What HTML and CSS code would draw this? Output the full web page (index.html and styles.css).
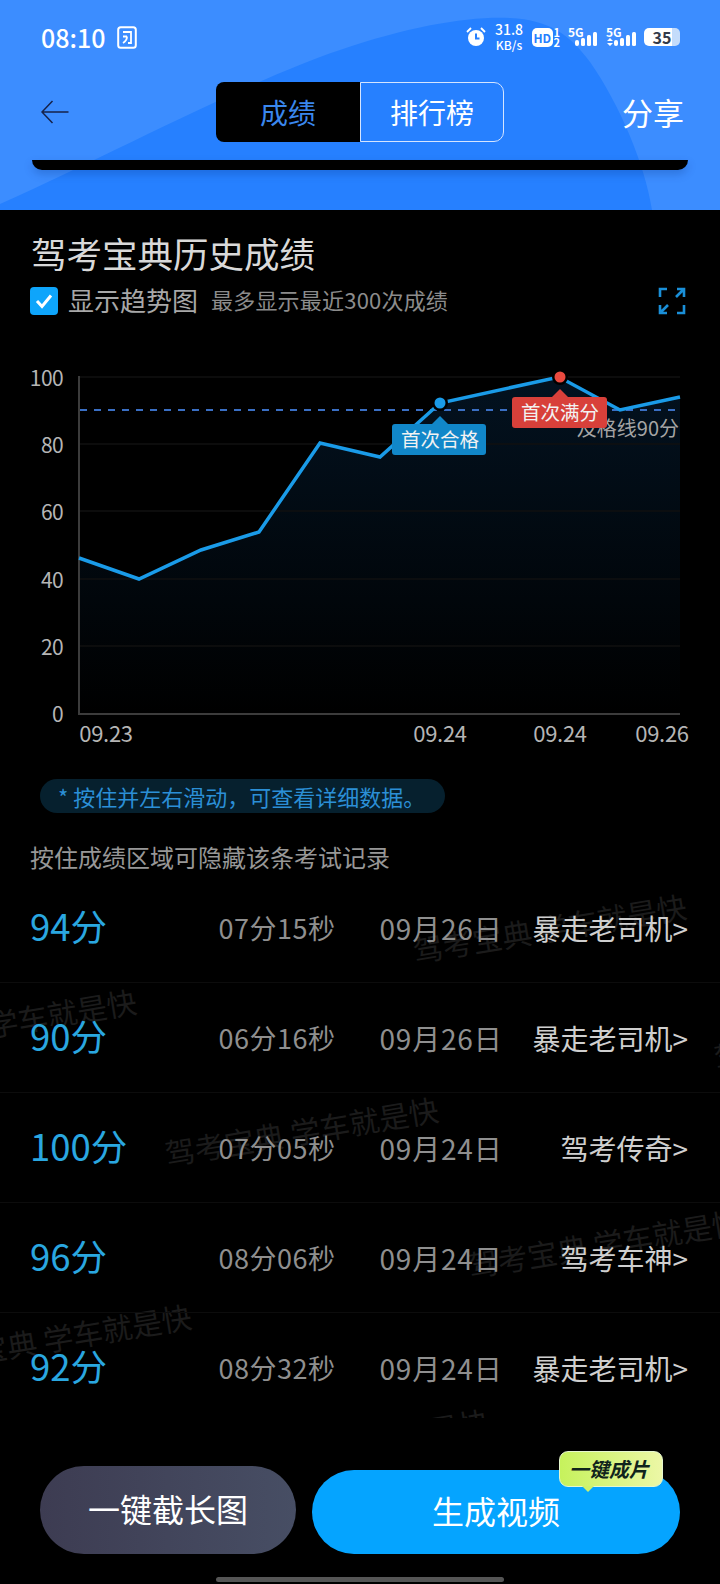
FILE: index.html
```html
<!DOCTYPE html>
<html lang="zh-CN">
<head>
    <meta charset="UTF-8">
    <meta name="viewport" content="width=device-width, initial-scale=1.0">
    <title>驾考宝典历史成绩</title>
    <link rel="stylesheet" href="styles.css">
</head>
<body>
    <header class="top">
        <svg class="top-blob" width="720" height="210" viewBox="0 0 720 210">
            <path d="M0 210 L0 204 C120 150 250 80 340 50 C410 26 470 16 510 18 C550 20 570 35 590 62 C620 105 645 165 652 210 Z" fill="#2680ff"/>
        </svg>
        <div class="status">
            <div class="status-left">
                <span class="clock">08:10</span>
                <svg width="20" height="23" viewBox="0 0 20 23">
                    <rect x="1.2" y="1.2" width="17.6" height="20.6" rx="2.5" fill="none" stroke="#fff" stroke-width="2"/>
                    <path d="M6 6h8v11h-3M6 10.5h4M10 10.5c0 3-1.500 5-4 6.500" fill="none" stroke="#fff" stroke-width="1.800"/>
                </svg>
            </div>
            <div class="status-right">
                <svg width="20" height="20" viewBox="0 0 20 20">
                    <circle cx="10" cy="11" r="8" fill="#fff"/>
                    <path d="M1 5l4-4M19 5l-4-4" stroke="#fff" stroke-width="1.800"/>
                    <path d="M10 6.500v5h3.500" fill="none" stroke="#2680ff" stroke-width="2"/>
                </svg>
                <div class="net"><span>31.8</span><span>KB/s</span></div>
                <div class="hd">
                    <span class="hd-box">HD</span>
                    <span class="sim"><span>1</span><span>2</span></span>
                </div>
                <div class="sig">
                    <span class="sig-text">5G</span>
                    <svg width="30" height="20" viewBox="0 0 30 20">
                        <rect x="7" y="13" width="4" height="6" rx="2" fill="#fff"/>
                        <rect x="13" y="11" width="4" height="8" rx="1.500" fill="#fff"/>
                        <rect x="19" y="8" width="4" height="11" rx="1.500" fill="#fff"/>
                        <rect x="25" y="5" width="4" height="14" rx="1.500" fill="#fff"/>
                    </svg>
                </div>
                <div class="sig">
                    <span class="sig-text">5G</span>
                    <svg width="30" height="20" viewBox="0 0 30 20">
                        <path d="M1 14l3-3 3 3zM1 16h6l-3 3z" fill="#fff"/>
                        <rect x="8" y="13" width="4" height="6" rx="2" fill="#fff"/>
                        <rect x="14" y="11" width="4" height="8" rx="1.500" fill="#fff"/>
                        <rect x="20" y="8" width="4" height="11" rx="1.500" fill="#fff"/>
                        <rect x="26" y="5" width="4" height="14" rx="1.500" fill="#fff"/>
                    </svg>
                </div>
                <div class="battery"><span>35</span></div>
            </div>
        </div>
        <nav class="nav">
            <svg class="back" width="28" height="24" viewBox="0 0 28 24">
                <path d="M27.500 12H1.500M11.500 1L1 12l10.500 11" fill="none" stroke="#16224a" stroke-width="1.500"/>
            </svg>
            <div class="tabs">
                <div class="tab tab-on">成绩</div>
                <div class="tab tab-off">排行榜</div>
            </div>
            <div class="share">分享</div>
        </nav>
        <div class="peek-bar"></div>
    </header>

    <main class="content">
        <div class="wm wm-1">驾考宝典 学车就是快</div>
        <div class="wm wm-2">驾考宝典 学车就是快</div>
        <div class="wm wm-3">驾考宝典 学车就是快</div>
        <div class="wm wm-4">驾考宝典 学车就是快</div>
        <div class="wm wm-5">驾考宝典 学车就是快</div>
        <div class="wm wm-6">驾考宝典 学车就是快</div>
        <div class="wm wm-7">驾考宝典 学车就是快</div>

        <h1 class="title">驾考宝典历史成绩</h1>
        <div class="trend-row">
            <span class="check">
                <svg width="18" height="16" viewBox="0 0 18 16">
                    <path d="M2 8l5 5.500L16 2.500" fill="none" stroke="#fff" stroke-width="3"/>
                </svg>
            </span>
            <span class="trend-label">显示趋势图</span>
            <span class="trend-sub">最多显示最近300次成绩</span>
            <svg class="expand" width="28" height="28" viewBox="0 0 28 28">
                <path d="M9 2H2v8M19 2h7v8M26 2l-8 8M2 18v8h7M2 26l8-8M26 18v8h-7" fill="none" stroke="#1a8fd8" stroke-width="2.600"/>
            </svg>
        </div>

        <svg class="chart" width="720" height="420" viewBox="0 340 720 420">
            <defs>
                <linearGradient id="area" x1="0" y1="0" x2="0" y2="1">
                    <stop offset="0" stop-color="#031220"/>
                    <stop offset="1" stop-color="#000"/>
                </linearGradient>
            </defs>
            <path d="M79 558L139 579L201 550L259 532L320 443L380 457L440 403L559 376L620 410L680 397V713H79Z" fill="url(#area)"/>
            <g stroke="#101010" stroke-width="1.500">
                <path d="M79 377H680M79 444H680M79 511H680M79 579H680M79 646H680"/>
            </g>
            <path d="M79 376V714H680" fill="none" stroke="#3c3c3c" stroke-width="2"/>
            <path d="M80 410H680" stroke="#3a6fc4" stroke-width="2" stroke-dasharray="7 7"/>
            <path d="M79 558L139 579L201 550L259 532L320 443L380 457L440 403L559 377L620 410L680 397" fill="none" stroke="#1a9be8" stroke-width="3.500" stroke-linejoin="miter"/>

            <g class="axis-y" text-anchor="end">
                <text x="63" y="386">100</text>
                <text x="63" y="453">80</text>
                <text x="63" y="520">60</text>
                <text x="63" y="588">40</text>
                <text x="63" y="655">20</text>
                <text x="63" y="722">0</text>
            </g>
            <g class="axis-x" text-anchor="middle">
                <text x="106" y="742">09.23</text>
                <text x="440" y="742">09.24</text>
                <text x="560" y="742">09.24</text>
                <text x="662" y="742">09.26</text>
            </g>

            <text class="pass-text" x="679" y="436" text-anchor="end">及格线90分</text>

            <circle cx="440" cy="403" r="8" fill="#000"/>
            <circle cx="440" cy="403" r="5.500" fill="#1a9be8"/>
            <path d="M432 424L440 416L448 424Z" fill="#1187c9"/>
            <rect x="392" y="424" width="94" height="31" rx="3" fill="#1187c9"/>
            <text class="tag-text" x="440" y="447" text-anchor="middle">首次合格</text>

            <circle cx="560" cy="377" r="8" fill="#000"/>
            <circle cx="560" cy="377" r="5.500" fill="#ea4a3f"/>
            <path d="M552 397L560 389L568 397Z" fill="#d8403a"/>
            <rect x="512" y="397" width="95" height="31" rx="3" fill="#d8403a"/>
            <text class="tag-text" x="560" y="420" text-anchor="middle">首次满分</text>
        </svg>

        <div class="hint">* 按住并左右滑动，可查看详细数据。</div>
        <div class="hide-tip">按住成绩区域可隐藏该条考试记录</div>

        <div class="rows">
            <div class="row">
                <span class="score">94分</span><span class="time">07分15秒</span><span class="date">09月26日</span><span class="level">暴走老司机&gt;</span>
            </div>
            <div class="row">
                <span class="score">90分</span><span class="time">06分16秒</span><span class="date">09月26日</span><span class="level">暴走老司机&gt;</span>
            </div>
            <div class="row">
                <span class="score">100分</span><span class="time">07分05秒</span><span class="date">09月24日</span><span class="level">驾考传奇&gt;</span>
            </div>
            <div class="row">
                <span class="score">96分</span><span class="time">08分06秒</span><span class="date">09月24日</span><span class="level">驾考车神&gt;</span>
            </div>
            <div class="row">
                <span class="score">92分</span><span class="time">08分32秒</span><span class="date">09月24日</span><span class="level">暴走老司机&gt;</span>
            </div>
        </div>
    </main>

    <footer class="bottom">
        <div class="actions">
            <button class="btn btn-shot">一键截长图</button>
            <button class="btn btn-video">生成视频
                <span class="badge">一键成片</span>
            </button>
        </div>
        <div class="home-bar"></div>
    </footer>
</body>
</html>
```
FILE: styles.css
```css
* {
    box-sizing: border-box;
}
body {
    width: 720px;
    height: 1584px;
    margin: 0;
    overflow: hidden;
    background: #000;
    color: #fff;
    font-family: "Noto Sans CJK SC", "Noto Sans", sans-serif;
}
.top {
    position: relative;
    height: 210px;
    background: #3c8dff;
    overflow: hidden;
}
.top-blob {
    position: absolute;
    left: 0;
    top: 0;
}
.status,
.nav,
.peek-bar {
    position: relative;
}
.status {
    display: flex;
    justify-content: space-between;
    align-items: center;
    height: 74px;
    padding: 0 40px 0 41px;
}
.status-left {
    display: flex;
    align-items: center;
    gap: 12px;
}
.clock {
    font-size: 25px;
    font-weight: 500;
    line-height: 30px;
}
.status-right {
    display: flex;
    align-items: center;
    gap: 8px;
}
.net {
    display: flex;
    flex-direction: column;
    align-items: center;
    width: 30px;
    font-size: 14px;
    font-weight: 500;
    line-height: 15px;
}
.net span + span {
    font-size: 12px;
}
.hd {
    display: flex;
    align-items: center;
    gap: 1px;
    width: 28px;
    height: 20px;
}
.hd-box {
    width: 21px;
    height: 19px;
    border-radius: 5px;
    background: #fff;
    color: #2680ff;
    font-size: 12px;
    font-weight: 700;
    line-height: 19px;
    text-align: center;
}
.sim {
    display: flex;
    flex-direction: column;
    font-size: 11px;
    font-weight: 700;
    line-height: 10px;
}
.sig {
    position: relative;
    display: flex;
    width: 30px;
    height: 20px;
}
.sig-text {
    position: absolute;
    left: 0;
    top: -1px;
    font-size: 12px;
    font-weight: 700;
    line-height: 12px;
}
.battery {
    display: flex;
    justify-content: center;
    align-items: center;
    width: 36px;
    height: 18px;
    border-radius: 5px;
    background: linear-gradient(90deg, #fff 78%, #c4dcfb 78%);
    color: #333b4a;
    font-size: 16px;
    font-weight: 700;
    line-height: 18px;
}
.nav {
    display: grid;
    grid-template-columns: 1fr 288px 1fr;
    align-items: center;
    height: 76px;
    padding: 0 36px;
}
.back {
    display: block;
    margin-left: 5px;
}
.tabs {
    display: flex;
    height: 60px;
}
.tab {
    display: flex;
    justify-content: center;
    align-items: center;
    width: 144px;
    font-size: 28px;
}
.tab-on {
    background: #000;
    border-radius: 8px 0 0 8px;
    color: #3a87ee;
}
.tab-off {
    border: 1px solid #d5e5ff;
    border-radius: 0 10px 10px 0;
}
.share {
    justify-self: end;
    font-size: 31px;
    line-height: 40px;
}
.peek-bar {
    height: 10px;
    margin: 10px 32px 0;
    background: #000;
    border-radius: 0 0 12px 12px;
    box-shadow: 0 4px 8px rgba(0, 40, 110, 0.25);
}
.content {
    position: relative;
    height: 1208px;
    padding-top: 23px;
    overflow: hidden;
}
.wm {
    position: absolute;
    color: #1b1b1b;
    font-size: 30px;
    line-height: 40px;
    white-space: nowrap;
    transform: rotate(-9.400deg);
    transform-origin: left center;
}
.wm-1 { left: 413px; top: 720px; }
.wm-2 { left: -137px; top: 815px; }
.wm-3 { left: 165px; top: 923px; }
.wm-4 { left: 468px; top: 1035px; }
.wm-5 { left: -82px; top: 1130px; }
.wm-6 { left: 215px; top: 1235px; }
.wm-7 { left: 714px; top: 827px; }
.title {
    position: relative;
    margin: 0;
    padding-left: 31px;
    color: #d9d9d9;
    font-size: 35.500px;
    font-weight: 400;
    line-height: 40px;
}
.trend-row {
    display: flex;
    align-items: center;
    height: 28px;
    margin-top: 14px;
    padding: 0 34px 0 30px;
}
.check {
    display: flex;
    justify-content: center;
    align-items: center;
    width: 28px;
    height: 28px;
    margin-right: 10px;
    border-radius: 4px;
    background: #0ea5fb;
}
.trend-label {
    margin-right: 13px;
    padding-bottom: 4px;
    color: #a8a8a8;
    font-size: 26px;
}
.trend-sub {
    padding-bottom: 4px;
    color: #8c8c8c;
    font-size: 22px;
    letter-spacing: 0.2px;
}
.expand {
    margin-left: auto;
}
.chart {
    display: block;
    margin-top: 25px;
}
.axis-y text,
.axis-x text {
    fill: #b5b5b5;
    font-size: 21px;
    letter-spacing: -0.6px;
}
.axis-x text {
    font-size: 22px;
    letter-spacing: -0.3px;
}
.pass-text {
    fill: #a5a5a5;
    font-size: 20px;
}
.tag-text {
    fill: #f2f2f2;
    font-size: 19.500px;
}
.hint {
    width: 405px;
    height: 34px;
    margin: 19px 0 0 40px;
    padding-left: 18px;
    border-radius: 17px;
    background: #06202e;
    color: #2b8fd6;
    font-size: 22px;
    line-height: 34px;
    white-space: nowrap;
}
.hide-tip {
    margin-top: 28px;
    padding-left: 30px;
    color: #979797;
    font-size: 24px;
    line-height: 32px;
}
.rows {
    position: relative;
}
.row {
    display: grid;
    grid-template-columns: 150px 194px 134px 1fr;
    align-items: center;
    height: 110px;
    padding: 0 32px 0 30px;
    border-bottom: 1px solid #0c0c0c;
}
.score {
    padding-bottom: 3px;
    color: #2aa7e0;
    font-size: 36.500px;
    line-height: 44px;
}
.time,
.date {
    color: #8f8f8f;
    font-size: 27px;
    letter-spacing: 0.5px;
    line-height: 36px;
    text-align: center;
    white-space: nowrap;
}
.date {
    font-size: 28px;
    letter-spacing: 0.8px;
}
.level {
    color: #cfcfcf;
    font-size: 28px;
    line-height: 36px;
    text-align: right;
    white-space: nowrap;
}
.bottom {
    height: 166px;
    background: #000;
}
.actions {
    display: flex;
    align-items: flex-end;
    gap: 16px;
    height: 136px;
    padding: 0 40px;
}
.btn {
    position: relative;
    padding: 0 0 5px;
    border: none;
    color: #fff;
    font-family: inherit;
    font-size: 32px;
}
.btn-shot {
    width: 256px;
    height: 88px;
    border-radius: 44px;
    background: linear-gradient(90deg, #3d3c52, #474e64);
}
.btn-video {
    width: 368px;
    height: 84px;
    border-radius: 42px;
    background: #05a4ff;
}
.badge {
    position: absolute;
    right: 17px;
    top: -19px;
    width: 104px;
    height: 36px;
    padding-right: 4px;
    border: 1px solid #e6f7cf;
    border-radius: 9px;
    background: linear-gradient(90deg, #c6f25c, #ecf7a6);
    color: #10241c;
    font-size: 20px;
    font-weight: 700;
    font-style: italic;
    line-height: 34px;
}
.badge::after {
    content: "";
    position: absolute;
    left: 22px;
    bottom: -6px;
    border-left: 6px solid transparent;
    border-right: 6px solid transparent;
    border-top: 6px solid #cdf36c;
}
.home-bar {
    width: 288px;
    height: 5px;
    margin: 23px auto 0;
    border-radius: 3px;
    background: #555;
}
```
